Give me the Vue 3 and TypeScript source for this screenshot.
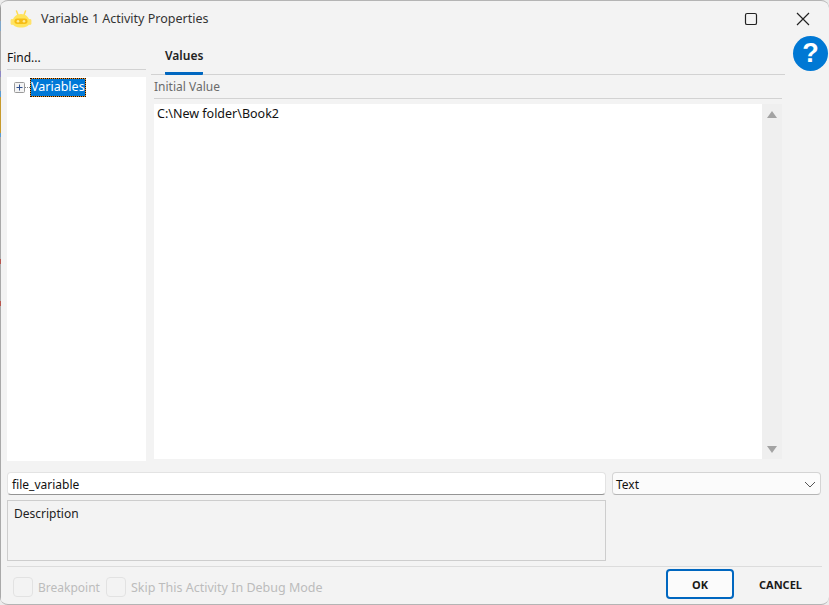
<script setup lang="ts">
const edge = 'linear-gradient(to bottom, #9a9a9a 0 20px, #7fa6c9 20px 30px, #a9a9a9 30px 70px, #8f88c4 70px 76px, #a9a9a9 76px 90px, #5b9bd0 90px 96px, #c79a2c 96px 132px, #5b9bd0 132px 136px, #a9a9a9 136px 258px, #b8564e 258px 263px, #a9a9a9 263px 300px, #b8564e 300px 305px, #a9a9a9 305px 100%)'
</script>

<template>
  <div class="window">
    <div class="edge" :style="{ background: edge }"></div>

    <header class="titlebar">
      <svg class="logo" width="22" height="20" viewBox="0 0 22 20">
        <path d="M6.5 2 L8 6 M15.5 2 L14 6" stroke="#ffdc55" stroke-width="1.5" stroke-linecap="round" fill="none" />
        <rect x="0.6" y="10" width="3" height="6" rx="1.4" fill="#ffe26a" />
        <rect x="18.4" y="10" width="3" height="6" rx="1.4" fill="#ffe26a" />
        <path d="M2.5 13.5 C2.5 8 6.5 5 11 5 C15.5 5 19.5 8 19.5 13.5 C19.5 17 16 18.5 11 18.5 C6 18.5 2.5 17 2.5 13.5 Z" fill="#ffe45c" />
        <rect x="4.5" y="9.5" width="13" height="5.4" rx="2.7" fill="#f6bd16" />
        <circle cx="8" cy="12.2" r="1.3" fill="#ffeb99" />
        <circle cx="14" cy="12.2" r="1.3" fill="#ffeb99" />
      </svg>
      <span class="title">Variable 1 Activity Properties</span>
      <div class="controls">
        <svg width="14" height="14" viewBox="0 0 14 14" class="max">
          <rect x="1.5" y="1.5" width="11" height="11" rx="1.6" fill="none" stroke="#222" stroke-width="1.2" />
        </svg>
        <svg width="16" height="16" viewBox="0 0 16 16" class="close">
          <path d="M2 2 L14 14 M14 2 L2 14" stroke="#222" stroke-width="1.2" fill="none" />
        </svg>
      </div>
    </header>

    <div class="help">?</div>

    <main class="main">
      <aside class="left">
        <div class="find">Find...</div>
        <div class="tree">
          <span class="expander">
            <svg width="11" height="11" viewBox="0 0 11 11">
              <rect x="0.5" y="0.5" width="10" height="10" rx="1" fill="#f4f4f4" stroke="#9a9a9a" />
              <path d="M2.5 5.5 H8.5 M5.5 2.5 V8.5" stroke="#2f4f8f" stroke-width="1" fill="none" />
            </svg>
          </span>
          <span class="connector"></span>
          <span class="node">Variables</span>
        </div>
      </aside>

      <section class="right">
        <div class="tabs">
          <div class="tab">Values</div>
        </div>
        <div class="panel">
          <div class="label">Initial Value</div>
          <div class="editor">
            <div class="text">C:\New folder\Book2</div>
            <div class="scroll">
              <span class="arrow up"></span>
              <span class="arrow down"></span>
            </div>
          </div>
        </div>
      </section>
    </main>

    <div class="form">
      <div class="name">file_variable</div>
      <div class="select">
        <span>Text</span>
        <svg width="12" height="7" viewBox="0 0 12 7">
          <path d="M1 1 L6 6 L11 1" fill="none" stroke="#555" stroke-width="1" />
        </svg>
      </div>
      <div class="desc">Description</div>
    </div>

    <footer class="footer">
      <div class="checks">
        <span class="box"></span>
        <span class="check-label">Breakpoint</span>
        <span class="box second"></span>
        <span class="check-label wide">Skip This Activity In Debug Mode</span>
      </div>
      <div class="buttons">
        <button class="btn ok">OK</button>
        <button class="btn cancel">CANCEL</button>
      </div>
    </footer>
  </div>
</template>

<style>
html, body { margin: 0; background: #ececec; }
</style>

<style scoped>
.window {
  position: relative;
  box-sizing: border-box;
  width: 829px;
  height: 605px;
  background: #f3f3f3;
  border: 1px solid #b4b4b4;
  border-left: 0;
  border-right: 0;
  border-radius: 8px;
  display: flex;
  flex-direction: column;
  overflow: hidden;
  font-family: "Noto Sans", sans-serif;
  font-size: 12px;
  color: #1a1a1a;
}
.edge { position: absolute; left: 0; top: 0; bottom: 0; width: 1px; }
.titlebar {
  height: 36px;
  flex: none;
  display: flex;
  align-items: center;
  padding-left: 10px;
}
.logo { margin-right: 9px; }
.title { color: #333; font-size: 12.5px; line-height: 34px; }
.controls { margin-left: auto; display: flex; align-items: center; padding-right: 18px; gap: 37px; }
.help {
  position: absolute;
  left: 793px;
  top: 35px;
  width: 35px;
  height: 35px;
  border-radius: 50%;
  background: #0078d4;
  color: #fff;
  font: bold 27px/35px "Liberation Sans", sans-serif;
  text-align: center;
}
.main { height: 424px; flex: none; display: flex; padding-left: 7px; }
.left { width: 139px; display: flex; flex-direction: column; margin-right: 5px; flex: none; }
.find {
  height: 33px;
  box-sizing: border-box;
  padding-top: 12px;
  border-bottom: 1px solid #d2d2d2;
  color: #111;
  line-height: 18px;
}
.tree {
  margin-top: 7px;
  flex: 1;
  background: #fff;
  display: flex;
  align-items: flex-start;
  padding-left: 7px;
}
.expander { margin-top: 5px; height: 11px; display: block; line-height: 0; }
.connector { width: 5px; margin-top: 10px; border-top: 1px dotted #888; }
.node {
  box-sizing: border-box;
  height: 19px;
  line-height: 16px;
  font-size: 12.5px;
  color: #fff;
  border: 1px dotted #111;
  background: linear-gradient(#0078d7, #0078d7) padding-box, #f09020 border-box;
  margin-top: 1px;
}
.right { width: 634px; flex: none; display: flex; flex-direction: column; }
.tabs { height: 38px; box-sizing: border-box; border-bottom: 1px solid #d2d2d2; padding-left: 14px; flex: none; }
.tab {
  width: 38px;
  font-weight: 600;
  line-height: 37px;
  color: #222;
  text-align: center;
  border-bottom: 3px solid #0067c0;
  border-radius: 0 0 1px 1px;
  height: 35px;
  white-space: nowrap;
}
.panel { flex: 1; display: flex; flex-direction: column; padding: 0 3px 2px; }
.label {
  height: 24px;
  box-sizing: border-box;
  line-height: 23px;
  border-bottom: 1px solid #d2d2d2;
  color: #6b6b6b;
  flex: none;
}
.editor { flex: 1; display: flex; margin-top: 5px; margin-right: 0; }
.text { flex: 1; background: #fff; padding: 1px 3px; line-height: 18px; color: #111; font-size: 12.5px; }
.scroll {
  width: 20px;
  background: #efefef;
  display: flex;
  flex-direction: column;
  justify-content: space-between;
  align-items: center;
  padding: 7px 0 6px;
}
.arrow { width: 0; height: 0; border-left: 5px solid transparent; border-right: 5px solid transparent; }
.arrow.up { border-bottom: 7px solid #a3a3a3; }
.arrow.down { border-top: 7px solid #a3a3a3; }
.form {
  margin: 11px 7px 0;
  display: grid;
  grid-template-columns: 599px 209px;
  column-gap: 6px;
  row-gap: 5px;
  flex: none;
}
.name, .select {
  box-sizing: border-box;
  height: 23px;
  background: #fff;
  border: 1px solid #e3e3e3;
  border-bottom-color: #949494;
  border-radius: 4px;
  padding: 0 4px;
  line-height: 23px;
  color: #111;
}
.select {
  background: #fbfbfb;
  display: flex;
  align-items: center;
  justify-content: space-between;
  padding: 1px 4px 0 3px;
  border-color: #d4d4d4;
  border-bottom-color: #b5b5b5;
}
.desc {
  grid-column: 1;
  box-sizing: border-box;
  height: 61px;
  border: 1px solid #cdcdcd;
  padding: 4px 6px;
  line-height: 18px;
  color: #222;
}
.footer {
  margin: 5px 7px 0;
  border-top: 1px solid #dcdcdc;
  flex: 1;
  display: flex;
  justify-content: space-between;
  align-items: flex-start;
}
.checks { display: flex; align-items: center; padding: 10px 0 0 6px; }
.box {
  width: 20px;
  height: 20px;
  box-sizing: border-box;
  border: 1px solid #e2e2e2;
  border-radius: 4px;
  margin-right: 5px;
}
.box.second { margin-left: 6px; }
.check-label { color: #bcbcbc; }
.check-label.wide { font-size: 12.5px; }
.buttons { display: flex; padding-top: 2px; padding-right: 20px; }
.btn {
  font-family: "Noto Sans", sans-serif;
  font-size: 11px;
  font-weight: 700;
  color: #1a1a1a;
  background: transparent;
  padding: 0;
  height: 30px;
}
.ok {
  width: 68px;
  border: 2px solid #0067c0;
  border-radius: 4px;
  background: #fbfbfb;
}
.cancel { border: 0; margin-left: 25px; }
</style>
